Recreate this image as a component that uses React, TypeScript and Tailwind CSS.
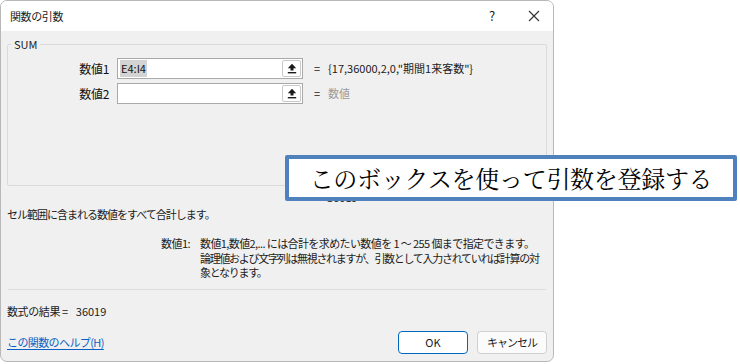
import React from "react";

const font = { fontFamily: '"Noto Sans CJK JP", "Noto Sans", sans-serif' };

function UploadIcon() {
  return (
    <svg width="10" height="11" viewBox="0 0 10 11">
      <path d="M5 0.8 L9.2 5.2 L6.5 5.2 L6.5 7.6 L3.5 7.6 L3.5 5.2 L0.8 5.2 Z" fill="#1a1a1a" />
      <rect x="0.8" y="9" width="8.4" height="1.4" fill="#1a1a1a" />
    </svg>
  );
}

function RefInput({ children }: { children?: React.ReactNode }) {
  return (
    <div className="w-[186px] h-[21px] bg-white border border-[#a9a9a9] flex items-center justify-between pl-[2px] pr-[1px]">
      <div className="flex items-center h-full text-[11px] leading-none text-[#111]">{children}</div>
      <div className="w-[19px] h-[17px] border border-[#c9c9c9] rounded-[2px] bg-white flex items-center justify-center">
        <UploadIcon />
      </div>
    </div>
  );
}

export default function App() {
  return (
    <div className="relative w-[740px] h-[364px] bg-white overflow-hidden text-[#1b1b1b]" style={font}>
      <div className="w-[554px] h-[362px] border border-[#b8b8b8] rounded-[7px] bg-[#f0f0f0] overflow-hidden flex flex-col">
        {/* title bar */}
        <div className="h-[30px] bg-white flex items-center shrink-0">
          <div className="pl-[9px] text-[11px] tracking-[-0.4px] text-[#1b1b1b]">関数の引数</div>
          <div className="flex-1" />
          <div className="w-[20px] text-center text-[13px] text-[#222] mr-[26px]">?</div>
          <svg width="12" height="12" viewBox="0 0 12 12" className="mr-[13px]">
            <path d="M1 1 L11 11 M11 1 L1 11" stroke="#333" strokeWidth="1.1" />
          </svg>
        </div>

        <div className="px-[6px] flex flex-col">
          {/* group box */}
          <fieldset className="mt-[6px] h-[149px] border border-[#dadada] rounded-[2px] px-0">
            <legend className="ml-[3px] px-[3px] text-[11px] leading-[14px] text-[#1b1b1b]">SUM</legend>
            <div className="pt-[7px] flex flex-col gap-[4px]">
              <div className="flex items-center">
                <div className="w-[101px] text-right text-[12px] tracking-[-0.3px] text-[#111]">数値1</div>
                <div className="ml-[8px]">
                  <RefInput>
                    <span className="bg-[#d3d3d3] px-[1px] h-[17px] flex items-center">E4:I4</span>
                  </RefInput>
                </div>
                <div className="ml-[11px] text-[11px]">=</div>
                <div className="ml-[8px] text-[11px]">{'{17,36000,2,0,"期間1来客数"}'}</div>
              </div>
              <div className="flex items-center">
                <div className="w-[101px] text-right text-[12px] tracking-[-0.3px] text-[#111]">数値2</div>
                <div className="ml-[8px]">
                  <RefInput />
                </div>
                <div className="ml-[11px] text-[11px]">=</div>
                <div className="ml-[8px] text-[11px] text-[#9a9a9a]">数値</div>
              </div>
            </div>
          </fieldset>

          <div className="mt-[3px] h-[16px] flex items-center text-[11px]">
            <span className="ml-[306px]">=</span>
            <span className="ml-[8px]">36019</span>
          </div>

          <div className="mt-[1px] text-[11px] tracking-[-1px] leading-[16px]">セル範囲に含まれる数値をすべて合計します。</div>

          <div className="mt-[14px] flex text-[11px] leading-[14.5px] whitespace-pre">
            <div className="ml-[154px] w-[39px] tracking-[-0.5px]">数値1:</div>
            <div className="tracking-[-1.3px]">
              <div className="tracking-[-0.6px]">数値1,数値2,... には合計を求めたい数値を 1 ～ 255 個まで指定できます。</div>
              <div>論理値および文字列は無視されますが、引数として入力されていれば計算の対</div>
              <div>象となります。</div>
            </div>
          </div>

          <div className="mt-[9px] h-px bg-[#dcdcdc] mx-[1px]" />

          <div className="mt-[13px] text-[11px] leading-[16px] flex">
            <span className="tracking-[-0.4px]">数式の結果 =</span>
            <span className="ml-[8px]">36019</span>
          </div>

          <div className="mt-[12px] flex items-center">
            <a className="text-[11px] tracking-[-0.6px] text-[#0a5fc4] underline underline-offset-2">この関数のヘルプ(H)</a>
            <div className="flex-1" />
            <button className="w-[70px] h-[23px] bg-white border border-[#0067c0] rounded-[4px] text-[11px] text-[#1b1b1b] mr-[9px]">OK</button>
            <button className="w-[70px] h-[23px] bg-[#fbfbfb] border border-[#d0d0d0] rounded-[4px] text-[11px] tracking-[-1px] text-[#1b1b1b]">キャンセル</button>
          </div>
        </div>
      </div>

      {/* overlay callout */}
      <div
        className="absolute left-[285px] top-[155px] w-[452px] h-[46px] bg-white border-[4px] border-[#4f81bd] rounded-[2px] flex items-center justify-center text-[24px] text-black tracking-[-0.3px]"
        style={{ fontFamily: '"Noto Serif CJK JP", "Noto Sans CJK JP", serif' }}
      >
        このボックスを使って引数を登録する
      </div>
    </div>
  );
}
